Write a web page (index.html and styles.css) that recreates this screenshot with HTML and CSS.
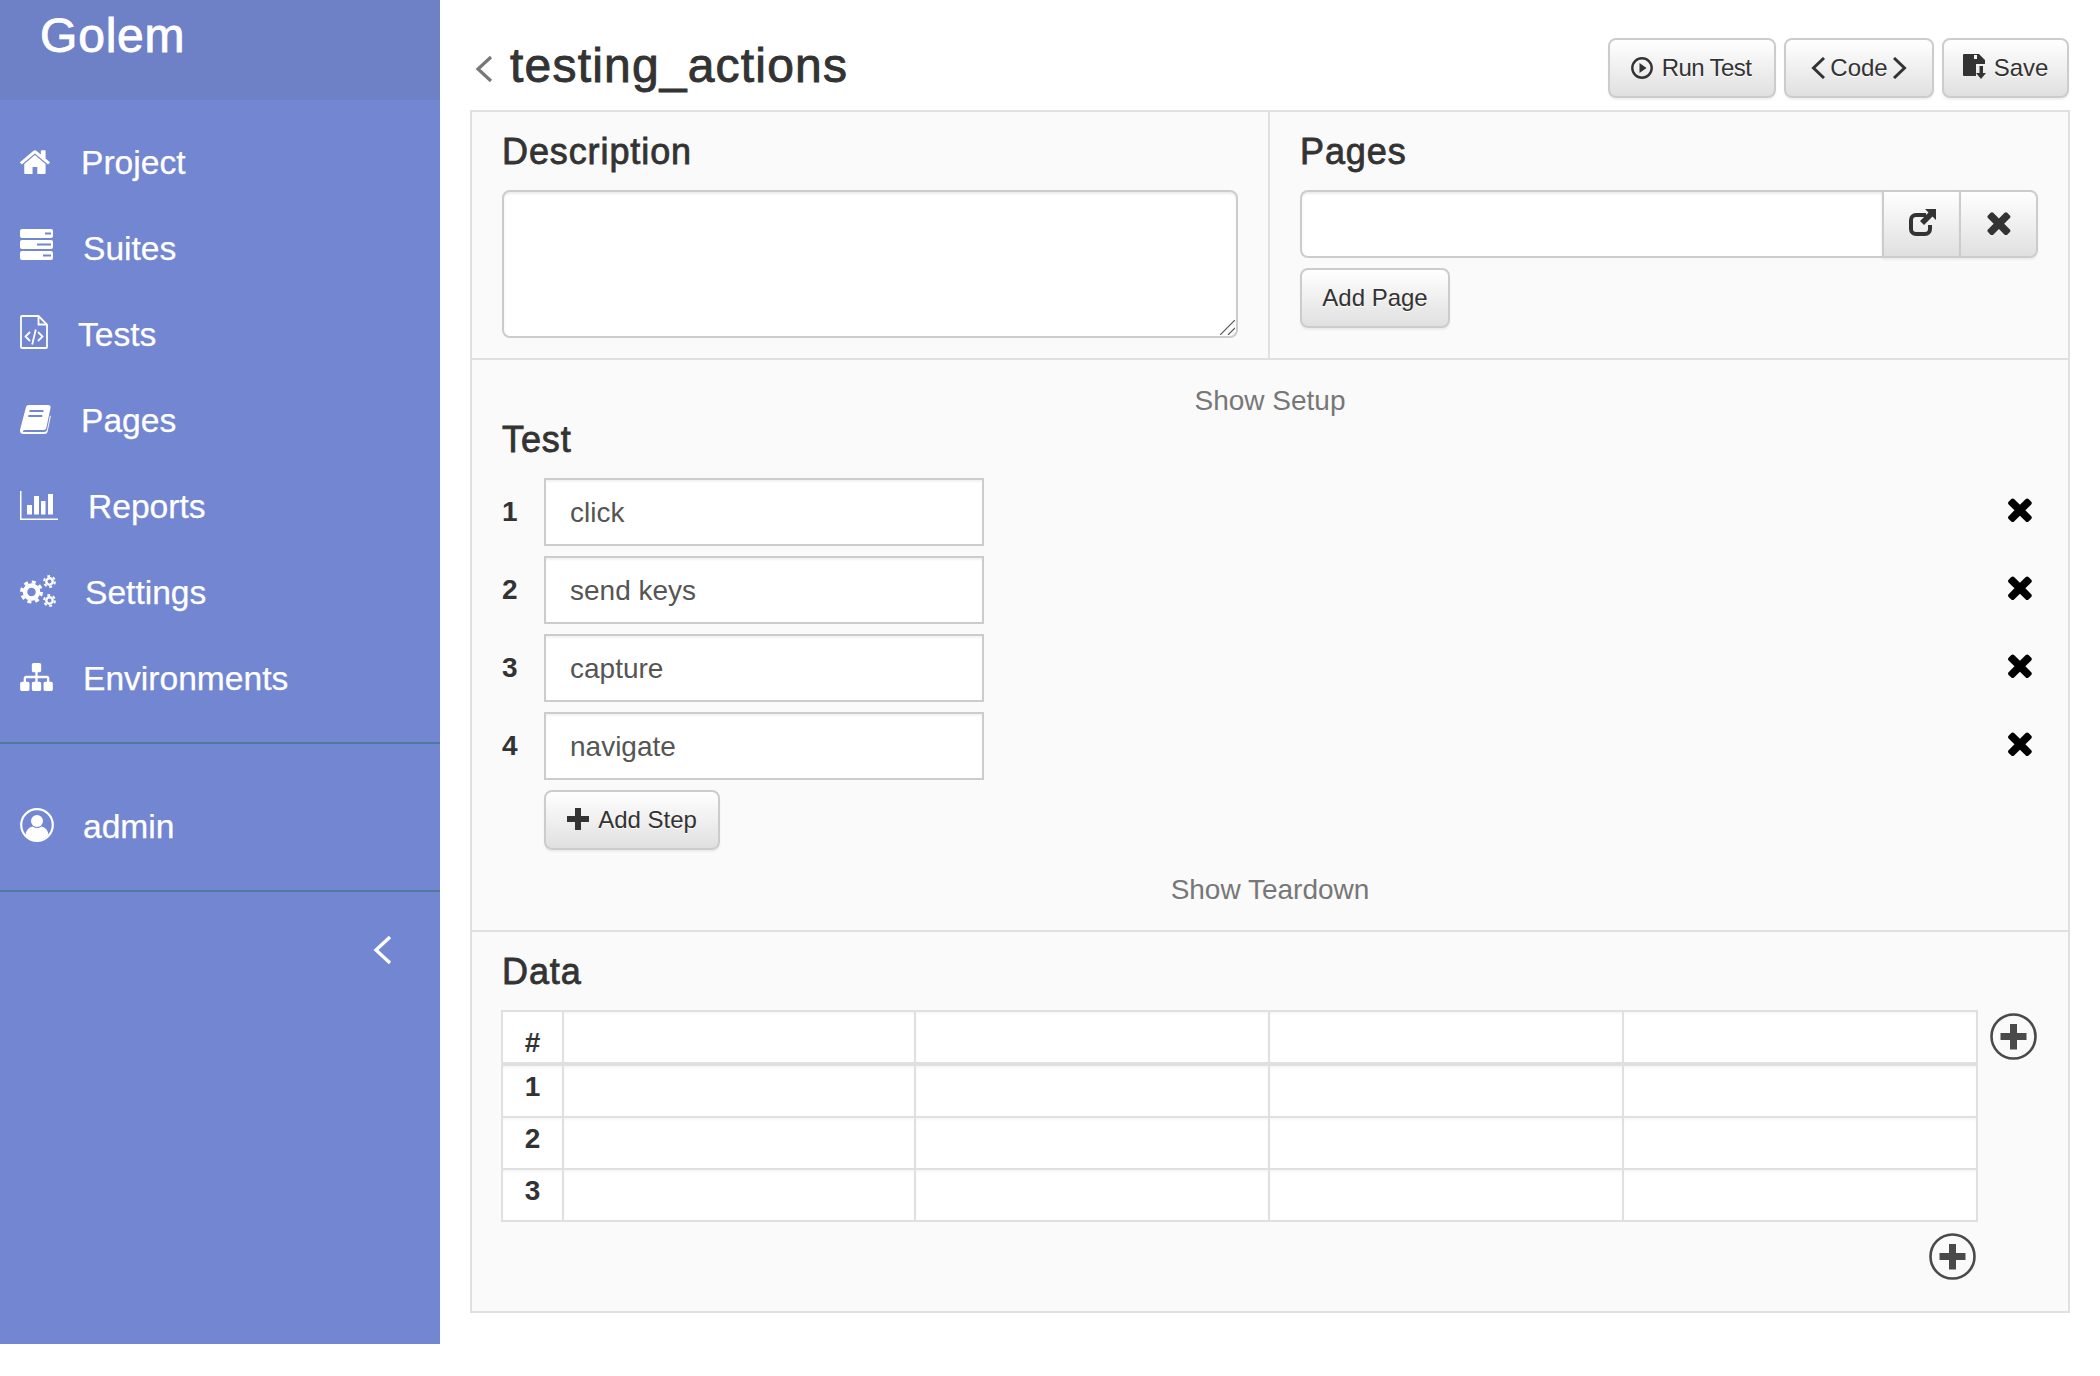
FILE: index.html
```html
<!DOCTYPE html>
<html lang="en">
<head>
<meta charset="utf-8">
<title>testing_actions</title>
<link rel="stylesheet" href="styles.css">
</head>
<body>
<svg class="defs" aria-hidden="true">
  <symbol id="times" viewBox="300 300 1200 1240"><path d="M1490 1322q0 40-28 68l-136 136q-28 28-68 28t-68-28l-294-294-294 294q-28 28-68 28t-68-28l-136-136q-28-28-28-68t28-68l294-294-294-294q-28-28-28-68t28-68l136-136q28-28 68-28t68 28l294 294 294-294q28-28 68-28t68 28l136 136q28 28 28 68t-28 68l-294 294 294 294q28 28 28 68z"/></symbol>
  <symbol id="pluscircle" viewBox="0 0 47 47"><circle cx="23.5" cy="23.5" r="22" fill="none" stroke="currentColor" stroke-width="2.6"/><path d="M20 11h7v9h9.500v7H27v9.500h-7V27h-9.500v-7H20z" fill="currentColor"/></symbol>
</svg>
<div class="app">
  <aside class="sidebar">
    <div class="brand">Golem</div>
    <nav class="nav">
      <a class="nav-item"><svg class="ni ni-home" viewBox="90 130 1620 1400"><path d="M1472 992v480q0 26-19 45t-45 19h-384v-384h-256v384h-384q-26 0-45-19t-19-45v-480q0-1 .5-3t.5-3l575-474 575 474q1 2 1 6zm223-69l-62 74q-8 9-21 11h-3q-13 0-21-7l-692-577-692 577q-12 8-24 7-13-2-21-11l-62-74q-8-10-7-23.5t11-21.5l719-599q32-26 76-26t76 26l244 204v-195q0-14 9-23t23-9h192q14 0 23 9t9 23v408l219 182q10 8 11 21.5t-7 23.5z"/></svg><span>Project</span></a>
      <a class="nav-item"><svg class="ni ni-server" viewBox="0 0 33 31"><path fill-rule="evenodd" d="M2 0h29a2 2 0 0 1 2 2v5a2 2 0 0 1-2 2H2a2 2 0 0 1-2-2V2a2 2 0 0 1 2-2zm23 3.500v2h6v-2zM2 11h29a2 2 0 0 1 2 2v5a2 2 0 0 1-2 2H2a2 2 0 0 1-2-2v-5a2 2 0 0 1 2-2zm15 3.500v2h14v-2zM2 22h29a2 2 0 0 1 2 2v5a2 2 0 0 1-2 2H2a2 2 0 0 1-2-2v-5a2 2 0 0 1 2-2zm21 3.500v2h8v-2z"/></svg><span>Suites</span></a>
      <a class="nav-item"><svg class="ni ni-file" viewBox="0 0 28 34"><g class="line"><path d="M2 1h16.500l8.500 8.500V32a1 1 0 0 1-1 1H2a1 1 0 0 1-1-1V2a1 1 0 0 1 1-1z"/><path d="M18.500 1v8.500H27"/><path d="M10 17l-4.500 4.500 4.500 4.500M18 17l4.500 4.500-4.500 4.500M15.800 14.500l-3.600 15"/></g></svg><span>Tests</span></a>
      <a class="nav-item"><svg class="ni ni-book" viewBox="0 0 31 29"><path d="M8.500 0H28q3 0 2.500 3l-4.200 20q-.5 2-2.500 2H5q-2.500 0-2 2h21q2.500 0 3-2l3-14.500.9.500-3.400 16q-.5 2-3 2H3.500Q0 29 0 25.500q0-1 .5-2.500L6 2q.5-2 2.500-2z"/><path class="cut" d="M9.500 6h14M8.300 11h14"/></svg><span>Pages</span></a>
      <a class="nav-item"><svg class="ni ni-chart" viewBox="0 0 38 29"><path d="M0 0h1.500v27.500H38V29H0zM7 14h5v9.500H7zM14 5h5v18.500h-5zM21 10h4.500v13.500H21zM28 3h5v20.500h-5z"/></svg><span>Reports</span></a>
      <a class="nav-item"><svg class="ni ni-cogs" viewBox="0 0 36 32"><g class="gear"><circle class="b" cx="11.500" cy="17" r="6.500"/><circle class="bt" cx="11.500" cy="17" r="10"/><circle class="s" cx="29.500" cy="6.500" r="3.200"/><circle class="st" cx="29.500" cy="6.500" r="5.400"/><circle class="s" cx="29.500" cy="25.500" r="3.200"/><circle class="st" cx="29.500" cy="25.500" r="5.400"/></g></svg><span>Settings</span></a>
      <a class="nav-item"><svg class="ni ni-sitemap" viewBox="0 0 1792 1536"><path transform="translate(0 -128)" d="M1792 1248v320q0 40-28 68t-68 28h-320q-40 0-68-28t-28-68v-320q0-40 28-68t68-28h96v-192h-512v192h96q40 0 68 28t28 68v320q0 40-28 68t-68 28h-320q-40 0-68-28t-28-68v-320q0-40 28-68t68-28h96v-192h-512v192h96q40 0 68 28t28 68v320q0 40-28 68t-68 28h-320q-40 0-68-28t-28-68v-320q0-40 28-68t68-28h96v-192q0-52 38-90t90-38h512v-192h-96q-40 0-68-28t-28-68v-320q0-40 28-68t68-28h320q40 0 68 28t28 68v320q0 40-28 68t-68 28h-96v192h512q52 0 90 38t38 90v192h96q40 0 68 28t28 68z"/></svg><span>Environments</span></a>
    </nav>
    <div class="user">
      <a class="nav-item"><svg class="ni ni-user" viewBox="0 0 34 34"><circle class="ring" cx="17" cy="17" r="15.800"/><circle cx="17" cy="13" r="6"/><path d="M5.500 27q1-7.500 7-8.500 4.500 3 9 0 6 1 7 8.500-5 5.500-11.500 5.500T5.500 27z"/></svg><span>admin</span></a>
    </div>
    <div class="collapse"><svg class="chev-side" viewBox="0 0 20 30"><path d="M18 2L4 15l14 13"/></svg></div>
  </aside>

  <main class="main">
    <header class="top">
      <div class="title-wrap">
        <svg class="back" viewBox="0 0 20 28"><path d="M17 2L4 14l13 12"/></svg>
        <h1 class="title">testing_actions</h1>
      </div>
      <div class="actions">
        <button class="btn btn-run"><svg class="bi bi-play" viewBox="0 0 22 22"><circle cx="11" cy="11" r="9.700"/><path class="tri" d="M8.500 6l7 5-7 5z"/></svg>Run Test</button>
        <button class="btn btn-code"><svg class="bi bi-chev" viewBox="0 0 14 22"><path d="M13 1L2.500 11 13 21"/></svg>Code<svg class="bi bi-chev" viewBox="0 0 14 22"><path d="M1 1l10.500 10L1 21"/></svg></button>
        <button class="btn btn-save"><svg class="bi bi-save" viewBox="0 0 23 25"><path fill-rule="evenodd" d="M1 0h15l6 6v4H13v12H1a1 1 0 0 1-1-1V1a1 1 0 0 1 1-1zm10 1v4h3V1z"/><path d="M16.500 12h3.500v7h3l-5 6-5-6h3.500z"/></svg>Save</button>
      </div>
    </header>

    <section class="panel">
      <div class="meta">
        <div class="meta-col">
          <h2 class="heading">Description</h2>
          <div class="desc-wrap">
            <textarea class="desc"></textarea>
            <svg class="grip" viewBox="0 0 15 15"><path d="M0 15L15 0M8 15l7-7"/></svg>
          </div>
        </div>
        <div class="meta-col meta-pages">
          <h2 class="heading">Pages</h2>
          <div class="group">
            <input class="group-input" type="text">
            <button class="group-btn"><svg class="gi-share" viewBox="0 0 28 28"><path class="box" d="M18 6H8a5 5 0 0 0-5 5v9a5 5 0 0 0 5 5h9a5 5 0 0 0 5-5v-4"/><path class="arr" d="M17 0h11v11l-3.500-3.500L16 16l-4-4 8.500-8.500z"/></svg></button>
            <button class="group-btn group-last"><svg class="gi-x"><use href="#times"/></svg></button>
          </div>
          <button class="btn btn-add-page">Add Page</button>
        </div>
      </div>

      <div class="test">
        <div class="toggle">Show Setup</div>
        <h2 class="heading">Test</h2>
        <div class="steps">
          <div class="step"><span class="num">1</span><div class="step-input">click</div><svg class="x"><use href="#times"/></svg></div>
          <div class="step"><span class="num">2</span><div class="step-input">send keys</div><svg class="x"><use href="#times"/></svg></div>
          <div class="step"><span class="num">3</span><div class="step-input">capture</div><svg class="x"><use href="#times"/></svg></div>
          <div class="step"><span class="num">4</span><div class="step-input">navigate</div><svg class="x"><use href="#times"/></svg></div>
        </div>
        <button class="btn btn-add-step"><svg class="bi bi-plus" viewBox="0 0 22 22"><path d="M8 0h6v8h8v6h-8v8H8v-8H0V8h8z"/></svg>Add Step</button>
        <div class="toggle toggle-end">Show Teardown</div>
      </div>

      <div class="data">
        <h2 class="heading">Data</h2>
        <div class="data-body">
          <div class="data-left">
            <table class="grid">
              <colgroup><col class="c0"><col class="c1"><col class="c2"><col class="c3"><col class="c4"></colgroup>
              <tr class="head"><th>#</th><td></td><td></td><td></td><td></td></tr>
              <tr class="first"><th>1</th><td></td><td></td><td></td><td></td></tr>
              <tr><th>2</th><td></td><td></td><td></td><td></td></tr>
              <tr><th>3</th><td></td><td></td><td></td><td></td></tr>
            </table>
            <div class="add-row"><svg class="plus"><use href="#pluscircle"/></svg></div>
          </div>
          <svg class="plus plus-col"><use href="#pluscircle"/></svg>
        </div>
      </div>
    </section>
  </main>
</div>
</body>
</html>
```
FILE: styles.css
```css
* { box-sizing: border-box; }
html, body { margin: 0; padding: 0; background: #fff; }
body { font-family: "Liberation Sans", Arial, sans-serif; font-size: 28px; color: #333; overflow: hidden; }
.defs { display: none; }
.app { display: flex; align-items: flex-start; width: 2100px; height: 1376px; }

/* sidebar */
.sidebar { width: 440px; height: 1344px; flex: none; background: #7386d1; color: #fff; }
.brand { height: 100px; background: #6e80c6; padding-left: 40px; font-size: 48px; line-height: 72px; letter-spacing: .8px; -webkit-text-stroke: .9px #fff; }
.nav { padding-top: 20px; padding-bottom: 20px; }
.nav-item { display: flex; align-items: center; height: 86px; padding-left: 20px; font-size: 33.6px; -webkit-text-stroke: .25px #fff; }
.ni { flex: none; fill: #fff; }
.ni-home { width: 30px; height: 26px; margin-right: 31px; position: relative; top: -2px; }
.ni-server { width: 33px; height: 31px; margin-right: 30px; position: relative; top: -5px; }
.ni-file { width: 28px; height: 34px; margin-right: 30px; position: relative; top: -3px; }
.ni-book { width: 31px; height: 29px; margin-right: 30px; position: relative; top: -2px; }
.ni-chart { width: 38px; height: 29px; margin-right: 30px; position: relative; top: -2px; }
.ni-cogs { width: 36px; height: 32px; margin-right: 29px; position: relative; top: -2px; }
.ni-sitemap { width: 33px; height: 28px; margin-right: 30px; position: relative; top: -2px; }
.ni-user { width: 34px; height: 34px; margin-right: 29px; position: relative; top: -2px; }
.ni-file .line { fill: none; stroke: #fff; stroke-width: 1.800; }
.ni-book .cut { fill: none; stroke: #7386d1; stroke-width: 2; }
.ni-user .ring { fill: none; stroke: #fff; stroke-width: 2.200; }
.gear { fill: none; stroke: #fff; }
.gear .b { stroke-width: 4.500; }
.gear .bt { stroke-width: 3; stroke-dasharray: 4 3.854; }
.gear .s { stroke-width: 2.400; }
.gear .st { stroke-width: 2; stroke-dasharray: 2.800 2.855; }
.user { border-top: 2px solid #4f7c9c; border-bottom: 2px solid #4f7c9c; padding: 40px 0 20px; }
.collapse { display: flex; justify-content: flex-end; padding: 43px 48px 0 0; }
.chev-side { width: 20px; height: 30px; fill: none; stroke: #fff; stroke-width: 3.400; }

/* main */
.main { width: 1660px; padding: 0 30px; flex: none; }
.top { display: flex; justify-content: space-between; height: 110px; }
.title-wrap { display: flex; align-items: flex-start; padding-top: 36px; padding-left: 4px; }
.back { width: 20px; height: 28px; margin: 19px 16px 0 0; fill: none; stroke: #777; stroke-width: 3.200; }
.title { margin: 0; font-size: 48px; line-height: 60px; font-weight: 400; color: #333; letter-spacing: 1.200px; -webkit-text-stroke: .9px #333; }
.actions { display: flex; gap: 8px; padding-top: 38px; padding-right: 1px; align-items: flex-start; }

.btn { display: inline-flex; align-items: center; justify-content: center; height: 60px; padding: 0; font: 24px "Liberation Sans", Arial, sans-serif; color: #333; background: linear-gradient(#fff, #e0e0e0); border: 2px solid #ccc; border-radius: 8px; box-shadow: 0 2px 2px rgba(0,0,0,.06); text-shadow: 0 1px 0 #fff; }
.btn-run { width: 168px; padding-right: 2px; letter-spacing: -.6px; }
.btn-code { width: 150px; gap: 5px; }
.btn-save { width: 127px; }
.bi { flex: none; }
.bi-play { width: 22px; height: 22px; margin-right: 9px; fill: none; stroke: #333; stroke-width: 2.400; }
.bi-play .tri { fill: #333; stroke: none; }
.bi-chev { width: 14px; height: 22px; fill: none; stroke: #333; stroke-width: 3; }
.bi-save { width: 23px; height: 25px; margin-right: 8px; fill: #333; position: relative; top: -2px; }
.bi-plus { width: 22px; height: 22px; margin-right: 9px; fill: #333; position: relative; top: -1px; }

.panel { border: 2px solid #e0e0e0; background: #fafafa; width: 1600px; height: 1203px; }
.heading { margin: 0; font-size: 36px; line-height: 40px; font-weight: 400; color: #333; letter-spacing: .9px; -webkit-text-stroke: .8px #333; }

.meta { display: grid; grid-template-columns: 796px 1fr; height: 248px; border-bottom: 2px solid #e0e0e0; }
.meta-col { padding: 20px 30px 0 30px; }
.meta-pages { border-left: 2px solid #e0e0e0; }
.meta .heading { margin-bottom: 18px; }
.desc-wrap { position: relative; }
.desc { display: block; width: 100%; height: 148px; border: 2px solid #ccc; border-radius: 8px; background: #fff; box-shadow: inset 0 2px 2px rgba(0,0,0,.075); outline: 0; margin: 0; resize: none; }
.grip { position: absolute; right: 3px; bottom: 3px; width: 15px; height: 15px; fill: none; stroke: #555; stroke-width: 1.200; }
.group { display: flex; height: 68px; width: 738px; }
.group-input { flex: 1; min-width: 0; border: 2px solid #ccc; border-right: 0; border-radius: 8px 0 0 8px; background: #fff; box-shadow: inset 0 2px 2px rgba(0,0,0,.075); outline: 0; }
.group-btn { display: flex; align-items: center; justify-content: center; width: 77px; padding: 0; border: 2px solid #ccc; border-right: 0; background: linear-gradient(#fff, #e0e0e0); box-shadow: 0 2px 2px rgba(0,0,0,.06); }
.group-last { width: 79px; border-right: 2px solid #ccc; border-radius: 0 8px 8px 0; }
.gi-share { width: 28px; height: 28px; margin-bottom: 2px; }
.gi-share .box { fill: none; stroke: #333; stroke-width: 4; }
.gi-share .arr { fill: #333; }
.gi-x { width: 24px; height: 24px; fill: #333; margin-bottom: 2px; }
.btn-add-page { margin-top: 10px; width: 150px; height: 60px; }

.test { height: 572px; padding: 20px 0 0 30px; border-bottom: 2px solid #e0e0e0; }
.toggle { height: 40px; line-height: 42px; text-align: center; color: #777; margin-left: -30px; }
.toggle-end { margin-top: 19px; }
.steps { margin-top: 18px; }
.step { display: flex; align-items: center; height: 68px; margin-bottom: 10px; padding-right: 36px; }
.num { width: 42px; font-weight: 700; color: #333; }
.step-input { width: 440px; height: 68px; line-height: 66px; padding-left: 24px; background: #fff; border: 2px solid #ccc; color: #555; box-shadow: inset 0 2px 2px rgba(0,0,0,.05); }
.x { width: 24px; height: 25px; margin-left: auto; fill: #000; position: relative; top: -3px; }
.btn-add-step { margin-left: 42px; width: 176px; height: 60px; }

.data { padding: 20px 0 0 30px; }
.data-body { display: flex; margin: 18px 0 0 -1px; gap: 14px; align-items: flex-start; }
.data-left { width: 1475px; }
.grid { width: 1475px; table-layout: fixed; border-collapse: collapse; }
.c0 { width: 61px; }
.c1 { width: 352px; }
.c2 { width: 354px; }
.c3 { width: 354px; }
.c4 { width: 354px; }
.grid th, .grid td { height: 52px; padding: 0; background: #fff; border: 2px solid #e0e0e0; box-shadow: inset 0 2px 2px rgba(0,0,0,.035); }
.grid th { font-size: 28px; line-height: 32px; font-weight: 700; vertical-align: top; padding-top: 5px; color: #333; text-align: center; }
.grid .head th, .grid .head td { height: 53px; border-bottom-width: 4px; }
.grid .first th, .grid .first td { height: 53px; }
.grid .head th { padding-top: 15px; box-shadow: none; }
.add-row { display: flex; justify-content: flex-end; margin-top: 11px; }
.plus { display: block; width: 47px; height: 47px; color: #4a4a4a; }
.plus-col { margin-top: 3px; flex: none; }
```
